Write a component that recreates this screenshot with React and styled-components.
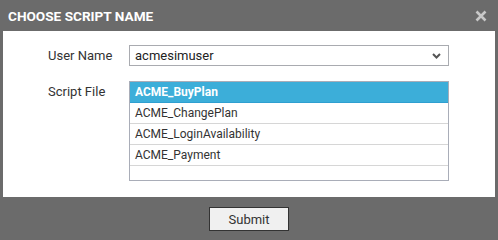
import React from "react"
import styled, { createGlobalStyle } from "styled-components"

const GlobalStyle = createGlobalStyle`
  html, body {
    margin: 0;
    padding: 0;
    background: #6b6b6b;
    font-family: Roboto, "Liberation Sans", Arial, sans-serif;
  }
`

const Dialog = styled.div`
  width: 498px;
  height: 240px;
  display: flex;
  flex-direction: column;
  background: #6b6b6b;
  overflow: hidden;
`

const Header = styled.div`
  height: 31px;
  display: flex;
  align-items: center;
  justify-content: space-between;
  padding: 0 11px 0 8px;
  box-sizing: border-box;
  color: #fff;
  font-size: 13.6px;
  font-weight: 700;
`

const Close = styled.button`
  border: 0;
  padding: 0;
  background: none;
  width: 12px;
  height: 12px;
  display: flex;
  cursor: pointer;
`

const Body = styled.div`
  margin: 0 3px;
  background: #fff;
  padding: 14px 0 16px 45px;
  display: flex;
  flex-direction: column;
  gap: 15px;
`

const Row = styled.div`
  display: flex;
  align-items: ${(p) => (p.$top ? "flex-start" : "center")};
`

const Label = styled.div`
  width: 81px;
  font-size: 13px;
  color: #333;
  padding-top: ${(p) => (p.$top ? "3px" : "0")};
`

const SelectBox = styled.div`
  width: 320px;
  height: 21px;
  box-sizing: border-box;
  border: 1px solid #a9abb0;
  display: flex;
  align-items: center;
  justify-content: space-between;
  padding: 0 7px 0 5px;
  font-size: 13px;
  color: #222;
`

const List = styled.div`
  width: 320px;
  height: 100px;
  box-sizing: border-box;
  border: 1px solid #a9adb8;
  overflow: hidden;
`

const Item = styled.div`
  height: 21px;
  box-sizing: border-box;
  border-bottom: 1px solid ${(p) => (p.$active ? "#2f9fd0" : "#d6d6d6")};
  background: ${(p) => (p.$active ? "#3caed9" : "#fff")};
  color: ${(p) => (p.$active ? "#fff" : "#333")};
  font-weight: ${(p) => (p.$active ? 700 : 400)};
  font-size: 12px;
  line-height: 20px;
  padding-left: 5px;
`

const Footer = styled.div`
  display: flex;
  justify-content: center;
  padding-top: 10px;
`

const Button = styled.button`
  width: 80px;
  height: 24px;
  border: 1px solid #333;
  background: #f0f0f0;
  color: #333;
  font-family: inherit;
  font-size: 13px;
  padding: 0;
`

const scripts = [
  "ACME_BuyPlan",
  "ACME_ChangePlan",
  "ACME_LoginAvailability",
  "ACME_Payment",
  "",
]

const App = () => {
  return (
    <>
      <GlobalStyle />
      <Dialog>
        <Header>
          <span>CHOOSE SCRIPT NAME</span>
          <Close aria-label="close">
            <svg width="12" height="12" viewBox="0 0 12 12">
              <path d="M1.5 1.5 L10.5 10.5 M10.5 1.5 L1.5 10.5" stroke="#c8c8c8" strokeWidth="2.6" />
            </svg>
          </Close>
        </Header>
        <Body>
          <Row>
            <Label>User Name</Label>
            <SelectBox>
              <span>acmesimuser</span>
              <svg width="9" height="6" viewBox="0 0 9 6">
                <path d="M1 1 L4.5 4.5 L8 1" fill="none" stroke="#555" strokeWidth="2" />
              </svg>
            </SelectBox>
          </Row>
          <Row $top>
            <Label $top>Script File</Label>
            <List>
              {scripts.map((s, i) => (
                <Item key={i} $active={i === 0}>
                  {s}
                </Item>
              ))}
            </List>
          </Row>
        </Body>
        <Footer>
          <Button>Submit</Button>
        </Footer>
      </Dialog>
    </>
  )
}

export default App
